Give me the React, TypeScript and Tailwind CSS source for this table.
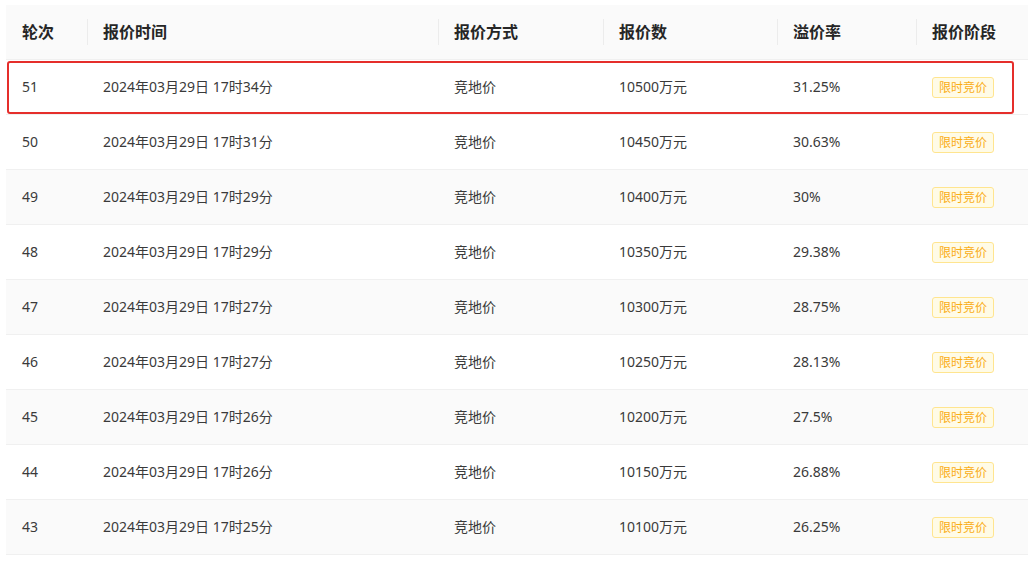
const rows = [
  { round: 51, time: "17时34分", price: "10500万元", rate: "31.25%" },
  { round: 50, time: "17时31分", price: "10450万元", rate: "30.63%" },
  { round: 49, time: "17时29分", price: "10400万元", rate: "30%" },
  { round: 48, time: "17时29分", price: "10350万元", rate: "29.38%" },
  { round: 47, time: "17时27分", price: "10300万元", rate: "28.75%" },
  { round: 46, time: "17时27分", price: "10250万元", rate: "28.13%" },
  { round: 45, time: "17时26分", price: "10200万元", rate: "27.5%" },
  { round: 44, time: "17时26分", price: "10150万元", rate: "26.88%" },
  { round: 43, time: "17时25分", price: "10100万元", rate: "26.25%" },
];

const headers = ["轮次", "报价时间", "报价方式", "报价数", "溢价率", "报价阶段"];

const cols = "grid grid-cols-[81px_351px_165px_174px_139px_1fr]";

function App() {
  return (
    <div
      className="min-h-screen bg-white pl-[6px] pt-[5px]"
      style={{ fontFamily: '"Noto Sans", "Noto Sans CJK SC", sans-serif' }}
    >
      <div className="w-[1022px]">
        <div className={`${cols} h-[55px] bg-[#fafafa] border-b border-[#f0f0f0]`}>
          {headers.map((h, i) => (
            <div key={h} className="relative flex items-center pl-4 text-base font-semibold text-[#262626]">
              {i > 0 && (
                <span className="absolute left-0 top-1/2 h-[26px] w-px -translate-y-1/2 bg-[#ececec]" />
              )}
              {h}
            </div>
          ))}
        </div>
        {rows.map((r, i) => (
          <div
            key={r.round}
            className={`${cols} relative h-[55px] border-b border-[#f0f0f0] text-sm text-[#3a3a3a] ${
              i % 2 === 0 && i > 0 ? "bg-[#fafafa]" : "bg-white"
            }`}
          >
            <div className="flex items-center pl-4">{r.round}</div>
            <div className="flex items-center pl-4">2024年03月29日 {r.time}</div>
            <div className="flex items-center pl-4">竞地价</div>
            <div className="flex items-center pl-4">{r.price}</div>
            <div className="flex items-center pl-4">{r.rate}</div>
            <div className="flex items-center pl-4">
              <span className="rounded-[3px] border border-[#ffe58f] bg-[#fffbe6] px-[6px] text-xs leading-[19px] text-[#faad14]">
                限时竞价
              </span>
            </div>
            {i === 0 && (
              <div className="pointer-events-none absolute left-px right-[14px] top-px bottom-0 rounded-[3px] border-[2.5px] border-[#e52e2b]" />
            )}
          </div>
        ))}
      </div>
    </div>
  );
}

export default App;
